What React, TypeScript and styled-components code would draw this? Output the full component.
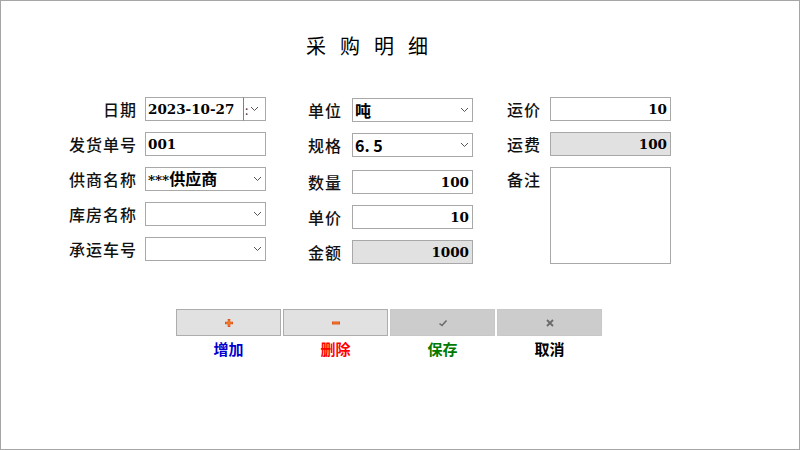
import React from "react";
import styled, { createGlobalStyle } from "styled-components";

const Global = createGlobalStyle`
  html, body { margin: 0; padding: 0; background: #fff; }
  body { font-family: "Noto Sans CJK SC", "Noto Sans", sans-serif; }
`;

const Page = styled.div`
  width: 800px;
  height: 450px;
  box-sizing: border-box;
  border: 1px solid #a6a6a6;
  background: #fff;
  display: flex;
  flex-direction: column;
  align-items: stretch;
`;

const Title = styled.div`
  margin-top: 31px;
  height: 28px;
  padding-left: 14px;
  text-align: center;
  font-size: 20px;
  line-height: 28px;
  letter-spacing: 14px;
  color: #000;
  font-family: "Noto Sans CJK SC", sans-serif;
  transform: translateX(-33px);
`;

const Form = styled.div`
  margin-top: 38px;
  display: flex;
  align-items: flex-start;
  height: 180px;
`;

const Column = styled.div<{ $left: number; $labelW: number; $top?: number }>`
  margin-left: ${(p) => p.$left}px;
  margin-top: ${(p) => p.$top ?? 0}px;
  display: flex;
  flex-direction: column;
  gap: 11px;
  --label-w: ${(p) => p.$labelW}px;
`;

const Row = styled.div`
  display: flex;
  align-items: flex-start;
  gap: 8px;
`;

const Label = styled.div<{ $align?: string }>`
  width: var(--label-w);
  text-align: ${(p) => p.$align ?? "right"};
  font-size: 16px;
  letter-spacing: 1px;
  font-weight: 500;
  line-height: 24px;
  color: #111;
  white-space: nowrap;
`;

const Box = styled.div<{ $disabled?: boolean; $right?: boolean; $h?: number }>`
  box-sizing: border-box;
  width: 121px;
  height: ${(p) => p.$h ?? 24}px;
  border: 1px solid #a8a8a8;
  background: ${(p) => (p.$disabled ? "#e1e1e1" : "#fff")};
  display: flex;
  align-items: center;
  justify-content: ${(p) => (p.$right ? "flex-end" : "space-between")};
  padding: 0 3px 0 2px;
  overflow: hidden;
`;

const Value = styled.span<{ $serif?: boolean }>`
  font-family: ${(p) =>
    p.$serif
      ? '"DejaVu Serif", "Noto Sans CJK SC", serif'
      : '"Noto Sans CJK SC", sans-serif'};
  font-weight: 700;
  font-size: ${(p) => (p.$serif ? "13.5px" : "16px")};
  line-height: 22px;
  color: #000;
  white-space: nowrap;
`;

const CjkValue = styled.span`
  font-family: "Noto Sans CJK SC", sans-serif;
  font-size: 16px;
`;

const DateBox = styled.div`
  box-sizing: border-box;
  width: 121px;
  height: 24px;
  display: flex;
  align-items: stretch;
`;

const DateField = styled.div`
  box-sizing: border-box;
  flex: 1;
  border: 1px solid #a8a8a8;
  border-right: 1px solid #808080;
  display: flex;
  align-items: center;
  padding-left: 2px;
  overflow: hidden;
`;

const DateSpin = styled.div`
  box-sizing: border-box;
  width: 22px;
  border: 1px solid #a8a8a8;
  border-left: none;
  display: flex;
  align-items: center;
  gap: 2px;
  padding-left: 1px;
  font-size: 12px;
  color: #333;
`;

const Chevron = () => (
  <svg width="9" height="6" viewBox="0 0 9 6">
    <path d="M1 1 L4.5 4.5 L8 1" fill="none" stroke="#555" strokeWidth="1" />
  </svg>
);

const ButtonArea = styled.div`
  margin-top: 31px;
  margin-left: 175px;
  display: flex;
  gap: 2px;
`;

const ActionCol = styled.div`
  display: flex;
  flex-direction: column;
  align-items: center;
  width: 105px;
`;

const ActionButton = styled.div<{ $dark?: boolean }>`
  box-sizing: border-box;
  width: 105px;
  height: 27px;
  border: 1px solid ${(p) => (p.$dark ? "#c8c8c8" : "#adadad")};
  background: ${(p) => (p.$dark ? "#cccccc" : "#e1e1e1")};
  display: flex;
  align-items: center;
  justify-content: center;
`;

const ActionLabel = styled.div<{ $color: string }>`
  margin-top: 3px;
  font-size: 15px;
  font-weight: 700;
  line-height: 20px;
  color: ${(p) => p.$color};
  font-family: "Noto Sans CJK SC", sans-serif;
`;

const PlusIcon = () => (
  <svg width="10" height="10" viewBox="0 0 10 10">
    <path d="M5 1 V9 M1 5 H9" stroke="#e0521c" strokeWidth="2.6" />
    <path d="M5 2 V8 M2 5 H8" stroke="#f08a2a" strokeWidth="1" />
  </svg>
);
const MinusIcon = () => (
  <svg width="10" height="10" viewBox="0 0 10 10">
    <path d="M1 5 H9" stroke="#e0521c" strokeWidth="3" />
    <path d="M2 5 H8" stroke="#f08a2a" strokeWidth="1" />
  </svg>
);
const CheckIcon = () => (
  <svg width="10" height="10" viewBox="0 0 10 10">
    <path d="M1.5 5.5 L4 7.5 L8.5 2.5" fill="none" stroke="#6a6a6a" strokeWidth="1.6" />
  </svg>
);
const CrossIcon = () => (
  <svg width="10" height="10" viewBox="0 0 10 10">
    <path d="M2 2 L8 8 M8 2 L2 8" stroke="#6a6a6a" strokeWidth="1.8" />
  </svg>
);

const Select = ({ children }: { children?: React.ReactNode }) => (
  <Box>
    <Value>{children}</Value>
    <Chevron />
  </Box>
);

const Num = ({ value, disabled }: { value: string; disabled?: boolean }) => (
  <Box $right $disabled={disabled}>
    <Value $serif>{value}</Value>
  </Box>
);

const Plain = ({ value }: { value: string }) => (
  <Box>
    <Value $serif>{value}</Value>
  </Box>
);

export default function App() {
  return (
    <>
      <Global />
      <Page>
        <Title>采购明细</Title>
        <Form>
          <Column $left={56} $labelW={80} $top={-1}>
            <Row>
              <Label>日期</Label>
              <DateBox>
                <DateField>
                  <Value $serif>2023-10-27</Value>
                </DateField>
                <DateSpin>
                  <span>:</span>
                  <Chevron />
                </DateSpin>
              </DateBox>
            </Row>
            <Row>
              <Label>发货单号</Label>
              <Plain value="001" />
            </Row>
            <Row>
              <Label>供商名称</Label>
              <Select>
                <Value $serif>***</Value>
                <CjkValue>供应商</CjkValue>
              </Select>
            </Row>
            <Row>
              <Label>库房名称</Label>
              <Select />
            </Row>
            <Row>
              <Label>承运车号</Label>
              <Select />
            </Row>
          </Column>
          <Column $left={42} $labelW={36}>
            <Row>
              <Label $align="left">单位</Label>
              <Select>吨</Select>
            </Row>
            <Row>
              <Label $align="left">规格</Label>
              <Select>6. 5</Select>
            </Row>
            <Row style={{ marginTop: 2 }}>
              <Label $align="left">数量</Label>
              <Num value="100" />
            </Row>
            <Row>
              <Label $align="left">单价</Label>
              <Num value="10" />
            </Row>
            <Row>
              <Label $align="left">金额</Label>
              <Num value="1000" disabled />
            </Row>
          </Column>
          <Column $left={34} $labelW={35} $top={-1}>
            <Row>
              <Label $align="left">运价</Label>
              <Num value="10" />
            </Row>
            <Row>
              <Label $align="left">运费</Label>
              <Num value="100" disabled />
            </Row>
            <Row>
              <Label $align="left">备注</Label>
              <Box $h={97} />
            </Row>
          </Column>
        </Form>
        <ButtonArea>
          <ActionCol>
            <ActionButton>
              <PlusIcon />
            </ActionButton>
            <ActionLabel $color="#0000d0">增加</ActionLabel>
          </ActionCol>
          <ActionCol>
            <ActionButton>
              <MinusIcon />
            </ActionButton>
            <ActionLabel $color="#ff0000">删除</ActionLabel>
          </ActionCol>
          <ActionCol>
            <ActionButton $dark>
              <CheckIcon />
            </ActionButton>
            <ActionLabel $color="#007a00">保存</ActionLabel>
          </ActionCol>
          <ActionCol>
            <ActionButton $dark>
              <CrossIcon />
            </ActionButton>
            <ActionLabel $color="#000">取消</ActionLabel>
          </ActionCol>
        </ButtonArea>
      </Page>
    </>
  );
}
